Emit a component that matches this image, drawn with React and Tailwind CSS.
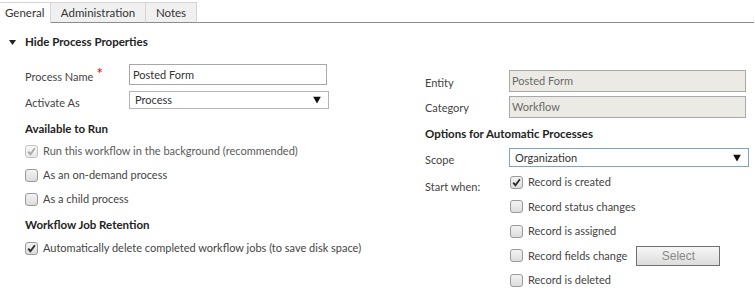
import React from 'react';

const font = { fontFamily: 'Lato, "Open Sans", sans-serif' };

const Check = ({ checked, disabled }) => (
  <span
    className={`flex items-center justify-center w-[13px] h-[13px] rounded-[3px] border shrink-0 ${
      disabled
        ? 'border-[#c4c4c4] bg-gradient-to-b from-[#f7f7f7] to-[#e9e9e9]'
        : 'border-[#9a9a9a] bg-gradient-to-b from-[#f3f3f3] to-[#dddddd]'
    }`}
  >
    {checked && (
      <svg width="9" height="9" viewBox="0 0 9 9">
        <path
          d="M1.2 4.6 L3.4 7.2 L7.9 1.2"
          fill="none"
          stroke={disabled ? '#a9a9a9' : '#2b2b2b'}
          strokeWidth="1.8"
        />
      </svg>
    )}
  </span>
);

const CheckRow = ({ checked, disabled, label, h = 'h-[24px]', children }) => (
  <div className={`flex items-center ${h}`}>
    <Check checked={checked} disabled={disabled} />
    <span className={`ml-[5px] leading-[14px] ${disabled ? 'text-[#5a5a5a]' : 'text-[#444]'}`}>{label}</span>
    {children}
  </div>
);

const Arrow = () => (
  <svg width="8" height="7" viewBox="0 0 8 7" className="absolute right-[7px] top-1/2 -translate-y-1/2">
    <path d="M0 0 H8 L4 7 Z" fill="#111" />
  </svg>
);

const Heading = ({ children, className = '' }) => (
  <div className={`font-bold text-[#222] text-[11.5px] leading-[14px] h-[14px] ${className}`}>{children}</div>
);

export default function App() {
  return (
    <div className="w-[755px] h-[293px] overflow-hidden bg-white text-[11px] text-[#444]" style={font}>
      {/* Tabs */}
      <div className="flex pt-[2px] text-[11.5px]">
        <div className="w-[51px] h-[21px] bg-white border-t border-r border-[#d4d4d4] pl-[5px] leading-[19px] text-[#333]">
          General
        </div>
        <div className="w-[95px] h-[21px] bg-[#f0f0f0] border-t border-r border-b border-t-[#d4d4d4] border-r-[#d4d4d4] border-b-[#8c8c8c] text-center leading-[19px] text-[#333]">
          Administration
        </div>
        <div className="w-[51px] h-[21px] bg-[#f0f0f0] border-t border-r border-b border-t-[#d4d4d4] border-r-[#d4d4d4] border-b-[#8c8c8c] text-center leading-[19px] text-[#333]">
          Notes
        </div>
        <div className="w-[557px] h-[21px] border-b border-[#8c8c8c]" />
      </div>

      {/* Section header */}
      <div className="flex items-center h-[16px] mt-[11px] pl-[9px]">
        <svg width="7" height="5" viewBox="0 0 7 5">
          <path d="M0 0 H7 L3.5 5 Z" fill="#222" />
        </svg>
        <span className="ml-[9px] font-bold text-[#222] text-[11.5px]">Hide Process Properties</span>
      </div>

      <div className="flex mt-[14px]">
        {/* Left column */}
        <div className="w-[400px] pl-[25px]">
          <div className="flex">
            <div className="w-[104px] pt-[6px] leading-[14px]">
              Process Name<span className="text-[#e00000] text-[15px] ml-[3px] relative -top-[2px] leading-[0]">*</span>
            </div>
            <div className="w-[198px] h-[21px] border border-[#a8a8a8] pl-[3px] leading-[19px] text-[#333]">
              Posted Form
            </div>
          </div>
          <div className="flex mt-[6px]">
            <div className="w-[104px] pt-[5px] leading-[14px]">Activate As</div>
            <div className="relative w-[200px] h-[18px] border border-[#b4b4b4] pl-[5px] leading-[16px] text-[#333]">
              Process
              <Arrow />
            </div>
          </div>

          <Heading className="mt-[12px]">Available to Run</Heading>
          <div className="mt-[3px]">
            <CheckRow checked disabled label="Run this workflow in the background (recommended)" />
            <CheckRow label="As an on-demand process" />
            <CheckRow label="As a child process" />
          </div>

          <Heading className="mt-[7px]">Workflow Job Retention</Heading>
          <div className="mt-[4px]">
            <CheckRow checked label="Automatically delete completed workflow jobs (to save disk space)" />
          </div>
        </div>

        {/* Right column */}
        <div className="pl-[25px] pt-[6px]">
          <div className="flex">
            <div className="w-[84px] pt-[6px] leading-[14px]">Entity</div>
            <div className="w-[237px] h-[22px] bg-[#ebeae4] border border-[#a8a8a8] pl-[2px] leading-[20px] text-[#6a6a6a]">
              Posted Form
            </div>
          </div>
          <div className="flex mt-[4px]">
            <div className="w-[84px] pt-[5px] leading-[14px]">Category</div>
            <div className="w-[237px] h-[22px] bg-[#ebeae4] border border-[#a8a8a8] pl-[2px] leading-[20px] text-[#6a6a6a]">
              Workflow
            </div>
          </div>

          <Heading className="mt-[9px]">Options for Automatic Processes</Heading>
          <div className="flex mt-[7px]">
            <div className="w-[84px] pt-[5px] leading-[14px]">Scope</div>
            <div className="relative w-[240px] h-[19px] border border-[#7da2ce] pl-[5px] leading-[17px] text-[#333]">
              Organization
              <Arrow />
            </div>
          </div>

          <div className="flex mt-[3px]">
            <div className="w-[85px] pt-[10px] leading-[14px]">Start when:</div>
            <div>
              <CheckRow h="h-[24.5px]" checked label="Record is created" />
              <CheckRow h="h-[24.5px]" label="Record status changes" />
              <CheckRow h="h-[24.5px]" label="Record is assigned" />
              <CheckRow h="h-[24.5px]" label="Record fields change">
                <div
                  className="ml-[9px] w-[84px] h-[20px] border border-[#707070] bg-gradient-to-b from-[#f7f7f7] to-[#dcdcdc] text-center leading-[18px] text-[#8a8a8a] text-[12px]"
                  style={{ fontFamily: '"Liberation Sans", Arial, sans-serif' }}
                >
                  Select
                </div>
              </CheckRow>
              <CheckRow h="h-[24.5px]" label="Record is deleted" />
            </div>
          </div>
        </div>
      </div>
    </div>
  );
}
